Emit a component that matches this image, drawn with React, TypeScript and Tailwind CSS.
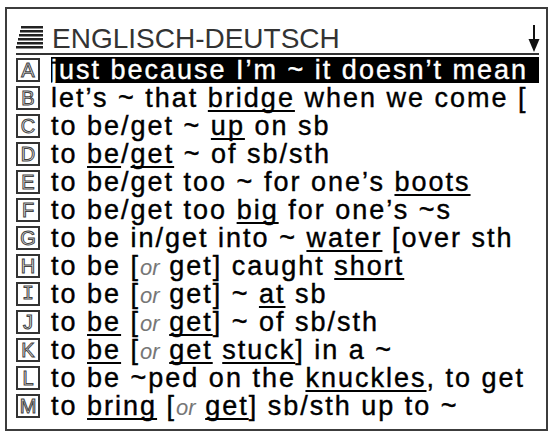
type Seg = string | { u: string } | { i: string };

type Entry = {
  key: string;
  parts: Seg[];
};

const ENTRIES: Entry[] = [
  { key: "A", parts: ["just because I’m ~ it doesn’t mean"] },
  { key: "B", parts: ["let’s ~ that ", { u: "bridge" }, " when we come ["] },
  { key: "C", parts: ["to be/get ~ ", { u: "up" }, " on sb"] },
  { key: "D", parts: ["to ", { u: "be" }, "/", { u: "get" }, " ~ of sb/sth"] },
  { key: "E", parts: ["to be/get too ~ for one’s ", { u: "boots" }] },
  { key: "F", parts: ["to be/get too ", { u: "big" }, " for one’s ~s"] },
  { key: "G", parts: ["to be in/get into ~ ", { u: "water" }, " [over sth"] },
  { key: "H", parts: ["to be [", { i: "or" }, " get] caught ", { u: "short" }] },
  { key: "I", parts: ["to be [", { i: "or" }, " get] ~ ", { u: "at" }, " sb"] },
  { key: "J", parts: ["to ", { u: "be" }, " [", { i: "or" }, " ", { u: "get" }, "] ~ of sb/sth"] },
  {
    key: "K",
    parts: ["to ", { u: "be" }, " [", { i: "or" }, " ", { u: "get" }, " ", { u: "stuck" }, "] in a ~"],
  },
  { key: "L", parts: ["to be ~ped on the ", { u: "knuckles" }, ", to get"] },
  { key: "M", parts: ["to ", { u: "bring" }, " [", { i: "or" }, " ", { u: "get" }, "] sb/sth up to ~"] },
];

function MenuIcon() {
  // stacked bars, each one reaching a little further left
  const bars = [0, 1, 2, 3, 4, 5];
  return (
    <svg width="28" height="26" viewBox="0 0 28 26" className="shrink-0">
      {bars.map((n) => (
        <rect key={n} x={5 - n} y={1 + n * 4} width={22 + n} height="2.5" fill="#222" />
      ))}
    </svg>
  );
}

function DownArrow() {
  return (
    <svg width="12" height="28" viewBox="0 0 12 28" className="shrink-0">
      <rect x="5" y="0" width="2" height="18" fill="#111" />
      <path d="M0.5 14 L11.5 14 L6 27 Z" fill="#111" />
    </svg>
  );
}

function Part({ seg }: { seg: Seg }) {
  if (typeof seg === "string") {
    return <>{seg}</>;
  }
  if ("u" in seg) {
    return (
      <span className="underline decoration-2 underline-offset-[3px] [text-decoration-skip-ink:none]">
        {seg.u}
      </span>
    );
  }
  return (
    <span className="text-[22px] leading-none italic tracking-normal text-[#777] [-webkit-text-stroke:0px]">
      {seg.i}
    </span>
  );
}

function KeyBox({ label }: { label: string }) {
  return (
    <div className="flex h-[24px] w-[24px] shrink-0 items-center justify-center border-2 border-[#333] bg-white">
      <span
        className={`text-[20px] leading-none text-[#f2f2f2] [-webkit-text-stroke:1px_#444] ${
          label === "I" ? "[font-family:'Liberation_Mono',monospace]" : ""
        }`}
      >
        {label}
      </span>
    </div>
  );
}

export default function App() {
  return (
    <div className="h-[434px] w-[554px] overflow-hidden bg-white pt-[7px] pl-[5px] [font-family:'Liberation_Sans',Arial,sans-serif]">
      <div className="h-[424px] w-[543px] border-2 border-[#3c3c3c] pl-[9px] pr-[7px]">
        <div className="flex h-[46px] items-end border-b-2 border-[#333]">
          <div className="mb-[2px] w-[36px]">
            <MenuIcon />
          </div>
          <p className="text-[28px] leading-[28px] text-[#333] whitespace-pre">ENGLISCH-DEUTSCH</p>
          <div className="ml-auto mr-[-1px]">
            <DownArrow />
          </div>
        </div>

        <ul className="mt-[1px]">
          {ENTRIES.map((entry, index) => {
            const active = index === 0;
            return (
              <li key={entry.key} className="flex h-[28px] items-center">
                <KeyBox label={entry.key} />
                <div
                  className={`ml-[11px] flex-1 whitespace-pre text-[27px] tracking-[2px] [-webkit-text-stroke:0.4px_currentColor] ${
                    active ? "my-[1px] bg-black leading-[26px] text-white" : "leading-[28px] text-black"
                  }`}
                >
                  {entry.parts.map((seg, i) => (
                    <Part key={i} seg={seg} />
                  ))}
                </div>
              </li>
            );
          })}
        </ul>
      </div>
    </div>
  );
}
